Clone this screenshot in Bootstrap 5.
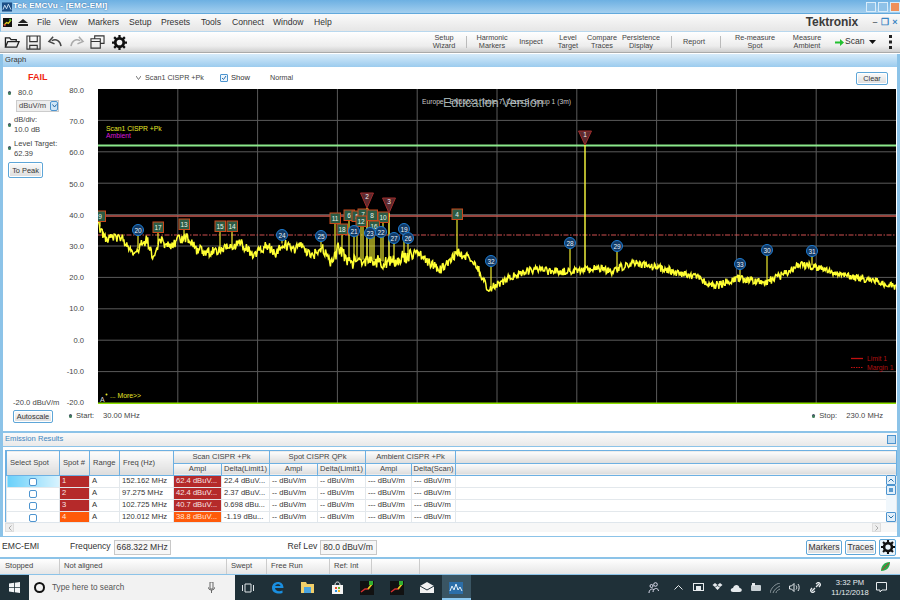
<!DOCTYPE html>
<html>

<head>
  <title>Tek EMCVu - [EMC-EMI]</title>
  <link href="https://cdn.jsdelivr.net/npm/bootstrap@5.3.2/dist/css/bootstrap.min.css" rel="stylesheet">
  <script src="https://cdn.jsdelivr.net/npm/bootstrap@5.3.2/dist/js/bootstrap.bundle.min.js"></script>
  <style>
    html, body { margin: 0; width: 900px; height: 600px; overflow: hidden; }
    body { font-family: "Liberation Sans", Arial, sans-serif; font-size: 7.6px; line-height: 1.1; color: #333; background: #fff; }
    .app-window { width: 900px; height: 600px; }

    .title-bar { height: 14px; background: linear-gradient(#6db0e2, #a3cfef); color: #fff; padding-left: 2px; font-weight: bold; font-size: 8px; letter-spacing: .2px; text-shadow: 0 0 2px #27619a; border-bottom: 1px solid #62a9dc; }
    .title-ic { margin-right: 1px; }
    .win-btn { width: 10px; height: 10px; border: 1px solid #d8ecfa; background: #8fc2e8; display: block; margin-left: 2px; }
    .win-btn-close { background: #f0905a; }

    .menu-bar { height: 18px; padding-left: 2px; background: linear-gradient(#fafafa, #e6e6e6); border-left: 1px solid #8cc3e8; border-bottom: 1px solid #b9d8ee; font-size: 8.6px; color: #333; }
    .eject-ic { margin-left: 6px; }
    .menu-items { display: grid; grid-template-columns: 22px 29px 41px 32px 40px 31px 41px 41px 30px; margin-left: 37px; left: 0; }
    .logo-text { font-weight: bold; font-size: 12px; color: #3b3b3b; margin-right: 12px; letter-spacing: -.1px; }
    .menu-ctl { width: 10px; text-align: center; color: #3a84c2; font-weight: bold; font-size: 9px; }

    .tool-bar { height: 21px; background: linear-gradient(#fff, #ededed 70%, #cfcfcf); border-bottom: 1px solid #aaa; }
    .tool-icons { display: grid; grid-template-columns: repeat(6, 21.6px); padding-left: 4px; width: 425px; }
    .tool-grid { display: grid; grid-template-columns: 38px 6px 46px 32px 42px 26px 52px 8px 38px 14px 56px 48px; align-items: center; height: 100%; font-size: 7.3px; line-height: 8.5px; color: #444; }
    .tool-grid > span { display: flex; justify-content: center; text-align: center; white-space: nowrap; }
    .tool-sep { justify-self: center; width: 1px; height: 12px; background: #bbb; }
    .scan-label { font-size: 8.6px; color: #333; margin-left: 1px; }

    .panel-outer { border-left: 3px solid #8cc3e8; border-right: 3px solid #8cc3e8; }
    .panel-title { height: 13px; background: linear-gradient(#d6ebfa, #9bcbee); padding-left: 2px; color: #333; }
    .graph-panel { height: 379px; border-bottom: 2px solid #8cc3e8; margin-top: 1px; }
    .graph-top { height: 22px; }
    .fail-label { padding-left: 25px; color: #f02510; font-weight: bold; font-size: 9px; }
    .scan-pick { width: 214px; padding-left: 133px; white-space: nowrap; color: #444; display: flex; align-items: center; gap: 4px; font-size: 7.2px; }
    .show-box { width: 8px; height: 8px; border: 1px solid #4d94cf; border-radius: 1px; margin-left: 3px; margin-right: 3px; background: #eef6fc; display: flex; }
    .mode-label { margin-left: 20px; color: #444; font-size: 7.2px; }
    .old-btn { background: linear-gradient(#fbfbfb, #dcdcdc); border: 1px solid #5ea6d8; border-radius: 2px; color: #333; font-size: 7.4px; line-height: 11px; padding: 0; box-shadow: inset 0 0 0 1px #fff; }
    .btn-clear { width: 32px; height: 13px; margin-right: 9px; }
    .btn-peak { width: 35px; height: 16px; margin-left: 5px; margin-top: 4px; flex: none; }
    .btn-auto { width: 40px; height: 13px; margin-left: 10px; }

    .graph-mid { height: 315px; }
    .side-col { width: 60px; color: #444; white-space: nowrap; }
    .side-row { display: flex; align-items: center; padding-left: 5px; gap: 3px; line-height: 10px; }
    .side-first { line-height: 8px; }
    .side-gap { margin-top: 4px; line-height: 9.500px; }
    .side-dot { width: 3px; height: 3px; background: #3f7f5a; border-radius: 50%; flex: none; box-shadow: 0 -1px 0 #446; }
    .unit-select { width: 43px; height: 12px; margin: 3px 0 3px 13px; background: #eee; border: 1px solid #ccc; padding-left: 2px; }
    .unit-arrow { width: 8px; height: 10px; background: #cfe5f6; border: 1px solid #4d94cf; border-radius: 2px; display: flex; align-items: center; justify-content: center; }
    .low-label { padding-left: 10px; margin-bottom: -3px; line-height: 8px; }
    .axis-col { width: 35px; color: #444; margin-top: -2px; margin-bottom: -3px; text-align: right; }
    .axis-col span { display: block; height: 8px; line-height: 8px; padding-right: 14px; }
    .chart-svg { display: block; width: 798px; height: 315px; background: #000; }
    .chart-svg text { font-family: "Liberation Sans", Arial, sans-serif; }

    .graph-bottom { height: 27px; padding-top: 6px; align-items: flex-start; color: #444; }
    .start-gap { margin-left: 16px; }
    .stop-gap { margin-right: 14px; }
    .start-stop { display: flex; align-items: center; height: 13px; }
    .lbl-start { width: 27px; }
    .lbl-stop { width: 27px; }

    .emis-panel { height: 103px; }
    .emis-title { height: 14px; background: linear-gradient(#fafafa, #e9e9e9); color: #3d86c0; padding-left: 2px; border-bottom: 1px solid #8cc3e8; }
    .corner-tag { width: 9px; height: 9px; background: #bfdcf2; border: 1px solid #4d94cf; margin-right: 1px; }
    .grid-wrap { height: 72px; margin: 3px 0 0 2px; overflow: hidden; position: relative; border-left: 1px solid #6db0e2; }
    .spots-table { table-layout: fixed; width: 891px; border-collapse: collapse; margin: 0; font-size: 7.6px; color: #333; }
    .spots-table th { font-weight: normal; background: linear-gradient(#fdfdfd, #dcdcdc); border: 1px solid #6db0e2; height: 12.500px; padding: 0 1px; text-align: center; white-space: nowrap; overflow: hidden; color: #444; }
    .spots-table th.head-left { text-align: left; padding-left: 3px; }
    .spots-table td { height: 12px; padding: 0 2px; border: 1px solid #e3e8ec; white-space: nowrap; overflow: hidden; }
    .cell-hot { background: #b52a2a; color: #f8e6e6; }
    .cell-warn { background: #ff5a0a; color: #ffe6d8; }
    .row-picked { background: linear-gradient(90deg, #69d0fa, #d8f3fe); }
    .spot-check { display: block; width: 8px; height: 8px; margin: 0 auto; border: 1px solid #4d94cf; border-radius: 2px; background: #fff; }
    .v-scroll { position: absolute; right: 1px; top: 25px; width: 10px; height: 47px; background: #f0f7fc; }
    .v-scroll i { display: flex; align-items: center; justify-content: center; height: 10px; flex: none; background: #e3f0fa; border: 1px solid #4d94cf; border-radius: 1px; }
    .h-scroll { height: 10px; margin: 0 0 0 2px; background: #f7f7f7; border-top: 1px solid #dfe6ec; }
    .h-scroll i { display: flex; align-items: center; justify-content: center; width: 9px; height: 9px; background: #eee; border: 1px solid #ddd; }

    .freq-bar { height: 21px; background: #fff; font-size: 8.6px; color: #333; border-top: 1px solid #8cc3e8; }
    .freq-name { width: 70px; padding-left: 2px; }
    .freq-input { border: 1px solid #c8c8c8; background: #f7f7f7; height: 15px; line-height: 13px; padding: 0 2px; width: 57px; margin-left: 3px; white-space: nowrap; }
    .ref-label { margin-left: 117px; }
    .btn-mark { font-size: 8.6px; height: 15px; margin-right: 3px; }
    .mark-w { width: 36px; }
    .trace-w { width: 31px; }
    .gear-btn { width: 17px; height: 17px; margin-right: 4px; border: 1px solid #5ea6d8; border-radius: 2px; background: #eaf4fb; display: flex; align-items: center; justify-content: center; }

    .status-bar { height: 18px; background: linear-gradient(#fff, #e6e6e6); border-top: 2px solid #8cc3e8; border-bottom: 1px solid #8cc3e8; color: #444; display: grid; grid-template-columns: 59px 167px 40px 63px 42px 48px 1fr; padding-left: 1px; }
    .status-bar span { display: flex; align-items: center; padding-left: 4px; border-right: 1px solid #ccc; }
    .status-bar span:last-child { border-right: 0; justify-content: flex-end; padding-right: 10px; }

    .task-bar { height: 25px; background: #1f3038; color: #e8edf0; flex: none; }
    .start-slot { width: 29px; }
    .search-box { width: 206px; height: 100%; background: #f2f2f2; color: #555; font-size: 8.2px; padding: 0 20px 0 5px; gap: 7px; }
    .search-ring { width: 11px; height: 11px; border: 2px solid #111; border-radius: 50%; }
    .task-apps { display: grid; grid-template-columns: repeat(8, 29.8px); margin-left: -2px; height: 100%; }
    .task-apps > span { display: flex; align-items: center; justify-content: center; }
    .task-on { background: #3a5563; box-shadow: inset 0 -2px 0 #8cc8f0; }
    .tray { display: grid; grid-template-columns: 26px 24px 16px 22px 16px 24px 14px 24px 18px; align-items: center; justify-items: center; }
    .clock-text { text-align: center; font-size: 7.6px; line-height: 10px; width: 52px; }
    .note-ic { margin-right: 13px; }
  </style>
</head>

<body>
  <div class="app-window d-flex flex-column">

    <div class="title-bar d-flex align-items-center">
      <svg width="10" height="10" viewBox="0 0 11 10" class="title-ic"><rect width="11" height="10" fill="#1d4f86"/><path d="M1 8 3 3 5 7 7 2 10 8" fill="none" stroke="#cfe6f8"/></svg>
      <span>Tek EMCVu - [EMC-EMI]</span>
      <span class="ms-auto d-flex">
        <span class="win-btn"></span><span class="win-btn"></span><span class="win-btn win-btn-close"></span>
      </span>
    </div>

    <div class="menu-bar d-flex align-items-center">
      <svg width="9" height="9" viewBox="0 0 10 10"><rect width="10" height="10" fill="#111"/><path d="M1 8 4 5 6 6 9 2" fill="none" stroke="#e0d020" stroke-width="1.4"/><rect x="7" y="1" width="2" height="2" fill="#3c3"/><rect x="1" y="7" width="2" height="2" fill="#c33"/></svg>
      <svg width="10" height="7" viewBox="0 0 10 7" class="eject-ic"><path d="M5 0 10 4H0ZM0 5H10V7H0Z" fill="#222"/></svg>
      <div class="menu-items position-absolute">
        <span>File</span><span>View</span><span>Markers</span><span>Setup</span><span>Presets</span><span>Tools</span><span>Connect</span><span>Window</span><span>Help</span>
      </div>
      <span class="ms-auto logo-text">Tektronix</span>
      <span class="menu-ctl text-secondary">–</span><span class="menu-ctl">❐</span><span class="menu-ctl">×</span>
    </div>

    <div class="tool-bar d-flex align-items-center">
      <div class="tool-icons">
        <svg width="16" height="15" viewBox="0 0 17 16" fill="none" stroke="#222" stroke-width="1.4"><path d="M1.5 13V3H6L7.500 5H13V7M1.500 13 4 7H16L13.500 13Z"/></svg>
        <svg width="15" height="15" viewBox="0 0 16 16" fill="none" stroke="#333" stroke-width="1.2"><path d="M1 1H15V15H1Z M4 1V7H12V1 M4 15V11H12V15"/></svg>
        <svg width="16" height="13" viewBox="0 0 17 14" fill="none" stroke="#444" stroke-width="1.6"><path d="M15 12C14 6 10 4 5 6M6.500 2 2 7 8 9.500"/></svg>
        <svg width="16" height="13" viewBox="0 0 17 14" fill="none" stroke="#aaa" stroke-width="1.6"><path d="M2 12C3 6 7 4 12 6M10.500 2 15 7 9 9.500"/></svg>
        <svg width="15" height="14" viewBox="0 0 16 15" fill="none" stroke="#333" stroke-width="1.2"><path d="M5 4V1H15V9H11M1 4H11V14H1ZM1 7H11"/></svg>
        <svg width="15" height="15" viewBox="0 0 16 16"><circle cx="8" cy="8" r="4.500" fill="none" stroke="#111" stroke-width="3"/><path d="M8 0V16M0 8H16M2.300 2.300 13.700 13.700M13.700 2.300 2.300 13.700" stroke="#111" stroke-width="2.400"/><circle cx="8" cy="8" r="3" fill="#f4f4f4"/></svg>
      </div>
      <div class="tool-grid">
        <span>Setup<br>Wizard</span>
        <i class="tool-sep"></i>
        <span>Harmonic<br>Markers</span>
        <span>Inspect</span>
        <span>Level<br>Target</span>
        <span>Compare<br>Traces</span>
        <span>Persistence<br>Display</span>
        <i class="tool-sep"></i>
        <span>Report</span>
        <i class="tool-sep"></i>
        <span>Re-measure<br>Spot</span>
        <span>Measure<br>Ambient</span>
      </div>
      <div class="d-flex align-items-center flex-grow-1">
        <svg width="9" height="7" viewBox="0 0 9 7" class="ms-1"><path d="M0 2.500H5V0L9 3.500 5 7V4.500H0Z" fill="#22c030"/></svg>
        <span class="scan-label">Scan</span>
        <svg width="7" height="4" viewBox="0 0 7 4" class="ms-1"><path d="M0 0H7L3.500 4Z" fill="#111"/></svg>
        <svg width="3" height="14" viewBox="0 0 3 14" class="ms-auto me-2"><path d="M0 0H3V3H0ZM0 5.500H3V8.500H0ZM0 11H3V14H0Z" fill="#222"/></svg>
      </div>
    </div>

    <div class="panel-outer graph-panel">
      <div class="panel-title d-flex align-items-center">Graph</div>
      <div class="graph-top d-flex align-items-center">
        <span class="fail-label position-absolute">FAIL</span>
        <span class="scan-pick">
          <svg width="5" height="4" viewBox="0 0 5 4"><path d="M0 0 2.500 3.500 5 0" fill="none" stroke="#777"/></svg>
          <span>Scan1 CISPR +Pk</span>
        </span>
        <span class="show-box"><svg width="6" height="6" viewBox="0 0 6 6"><path d="M1 3 2.500 4.500 5 1" fill="none" stroke="#2a70b0"/></svg></span><span>Show</span>
        <span class="mode-label">Normal</span>
        <button type="button" class="old-btn btn-clear ms-auto">Clear</button>
      </div>
      <div class="graph-mid d-flex">
        <div class="side-col d-flex flex-column">
          <div class="side-row side-first"><i class="side-dot"></i><span class="ms-1">80.0</span></div>
          <div class="unit-select d-flex align-items-center justify-content-between"><span>dBuV/m</span><i class="unit-arrow"><svg width="5" height="4" viewBox="0 0 5 4"><path d="M.5 .5 2.500 3 4.500 .5" fill="none" stroke="#26679f"/></svg></i></div>
          <div class="side-row"><i class="side-dot"></i><span>dB/div:<br>10.0 dB</span></div>
          <div class="side-row side-gap"><i class="side-dot"></i><span>Level Target:<br>62.39</span></div>
          <button type="button" class="old-btn btn-peak">To Peak</button>
          <div class="low-label mt-auto">-20.0 dBuV/m</div>
        </div>
        <div class="axis-col d-flex flex-column justify-content-between">
          <span>80.0</span><span>70.0</span><span>60.0</span><span>50.0</span><span>40.0</span><span>30.0</span><span>20.0</span><span>10.0</span><span>0.0</span><span>-10.0</span><span>-20.0</span>
        </div>
        <svg id="chart" class="chart-svg" viewBox="98 89 798 315"></svg>
      </div>
      <div class="graph-bottom d-flex">
        <button type="button" class="old-btn btn-auto">Autoscale</button>
        <div class="start-stop start-gap"><i class="side-dot me-1"></i><span class="lbl-start">Start:</span><span>30.00 MHz</span></div>
        <div class="start-stop ms-auto stop-gap"><i class="side-dot me-1"></i><span class="lbl-stop">Stop:</span><span>230.0 MHz</span></div>
      </div>
    </div>

    <div class="panel-outer emis-panel">
      <div class="emis-title d-flex align-items-center">Emission Results<span class="corner-tag ms-auto"></span></div>
      <div class="grid-wrap">
        <table class="spots-table">
          <colgroup>
            <col width="53"><col width="30"><col width="30"><col width="54">
            <col width="48"><col width="48"><col width="48"><col width="48"><col width="46"><col width="44"><col>
          </colgroup>
          <thead>
            <tr>
              <th rowspan="2" class="head-left">Select Spot</th><th rowspan="2" class="head-left">Spot #</th><th rowspan="2" class="head-left">Range</th><th rowspan="2" class="head-left">Freq (Hz)</th>
              <th colspan="2">Scan CISPR +Pk</th><th colspan="2">Spot CISPR QPk</th><th colspan="2">Ambient CISPR +Pk</th><th></th>
            </tr>
            <tr>
              <th>Ampl</th><th>Delta(Limit1)</th><th>Ampl</th><th>Delta(Limit1)</th><th>Ampl</th><th>Delta(Scan)</th><th></th>
            </tr>
          </thead>
          <tbody id="spotRows"></tbody>
        </table>
        <div class="v-scroll d-flex flex-column">
          <i><svg width="6" height="4" viewBox="0 0 6 4"><path d="M.5 3.500 3 1 5.500 3.500" fill="none" stroke="#2a6fa8"/></svg></i>
          <i><svg width="4" height="4" viewBox="0 0 4 4"><rect width="4" height="4" fill="#5b9bcf"/></svg></i>
          <span class="flex-grow-1"></span>
          <i><svg width="6" height="4" viewBox="0 0 6 4"><path d="M.5 .5 3 3 5.500 .5" fill="none" stroke="#2a6fa8"/></svg></i>
        </div>
      </div>
      <div class="h-scroll d-flex justify-content-between">
        <i><svg width="4" height="6" viewBox="0 0 4 6"><path d="M3.500 .5 1 3 3.500 5.500" fill="none" stroke="#aaa"/></svg></i>
        <i class="me-3"><svg width="4" height="6" viewBox="0 0 4 6"><path d="M.5 .5 3 3 .5 5.500" fill="none" stroke="#aaa"/></svg></i>
      </div>
    </div>

    <div class="freq-bar d-flex align-items-center">
      <span class="freq-name">EMC-EMI</span>
      <span>Frequency</span><span class="freq-input">668.322 MHz</span>
      <span class="ref-label">Ref Lev</span><span class="freq-input">80.0 dBuV/m</span>
      <button type="button" class="old-btn btn-mark mark-w ms-auto">Markers</button>
      <button type="button" class="old-btn btn-mark trace-w">Traces</button>
      <span class="gear-btn"><svg width="14" height="14" viewBox="0 0 16 16"><circle cx="8" cy="8" r="4.500" fill="none" stroke="#111" stroke-width="3"/><path d="M8 0V16M0 8H16M2.300 2.300 13.700 13.700M13.700 2.300 2.300 13.700" stroke="#111" stroke-width="2.400"/><circle cx="8" cy="8" r="3" fill="#eaf4fb"/></svg></span>
    </div>

    <div class="status-bar">
      <span>Stopped</span><span>Not aligned</span><span>Swept</span><span>Free Run</span><span>Ref: Int</span><span></span>
      <span><svg width="9" height="9" viewBox="0 0 9 9"><path d="M0 9C0 4 3 0 9 0 9 5 6 9 0 9Z" fill="#2aa84a"/><path d="M1 8 8 1" stroke="#c03030"/></svg></span>
    </div>

    <div class="task-bar d-flex align-items-center">
      <div class="start-slot d-flex justify-content-center">
        <svg width="11" height="11" viewBox="0 0 11 11"><path d="M0 1.500 5 .8V5H0ZM5.800.7 11 0V5H5.800ZM0 5.800H5V10.200L0 9.500ZM5.800 5.800H11V11L5.800 10.300Z" fill="#f2f5f7"/></svg>
      </div>
      <div class="search-box d-flex align-items-center">
        <i class="search-ring"></i><span>Type here to search</span>
        <svg width="7" height="11" viewBox="0 0 7 11" class="ms-auto"><path d="M2 0H5V7H2ZM0 5C0 9 7 9 7 5M3.500 8V11" fill="none" stroke="#666"/></svg>
      </div>
      <div class="task-apps">
        <span><svg width="12" height="12" viewBox="0 0 12 12" fill="none" stroke="#e0e5e8"><path d="M3 2H9V10H3ZM.5 3V9M11.500 3V9"/></svg></span>
        <span><svg width="13" height="13" viewBox="0 0 13 13"><path d="M1 7C1 3 4 1 7 1 10 1 12.500 3 12.500 7H4C4 10 8 11 11.500 9.500V12C7 13.500 1 12 1 7ZM4.200 5H9.500C9.300 2.700 4.800 2.700 4.200 5Z" fill="#1a8fe0"/></svg></span>
        <span><svg width="13" height="11" viewBox="0 0 13 11"><path d="M0 0H5L6 2H13V11H0Z" fill="#f0cf6a"/><path d="M3 5H10V11H3Z" fill="#4aa4e0"/></svg></span>
        <span><svg width="13" height="13" viewBox="0 0 13 13"><path d="M1 4H12V13H1Z" fill="#f4f4f4"/><path d="M4 4C4 0 9 0 9 4" fill="none" stroke="#f4f4f4"/><path d="M4 6H6V8H4Z" fill="#e74c2b"/><path d="M7 6H9V8H7Z" fill="#6ab82e"/><path d="M4 9H6V11H4Z" fill="#2a94e0"/><path d="M7 9H9V11H7Z" fill="#f0b820"/></svg></span>
        <span><svg width="14" height="14" viewBox="0 0 14 14"><rect width="14" height="14" fill="#111"/><path d="M1 11 5 8 8 8 12 3" fill="none" stroke="#d83030" stroke-width="1.500"/><path d="M8 8 12 3" stroke="#e0d020" stroke-width="1.500"/><path d="M9 0H13V4H9Z" fill="#32b032"/></svg></span>
        <span><svg width="14" height="14" viewBox="0 0 14 14"><rect width="14" height="14" fill="#111"/><path d="M1 11 5 8 8 8 12 3" fill="none" stroke="#d83030" stroke-width="1.500"/><path d="M8 8 12 3" stroke="#e0d020" stroke-width="1.500"/><path d="M9 0H13V4H9Z" fill="#32b032"/></svg></span>
        <span><svg width="14" height="11" viewBox="0 0 14 11"><path d="M0 4 7 0 14 4V11H0Z" fill="#f2f2f2"/><path d="M0 4 7 8 14 4" fill="none" stroke="#1f3038"/></svg></span>
        <span class="task-on"><svg width="14" height="12" viewBox="0 0 14 12"><rect width="14" height="12" fill="#2c6ea8"/><path d="M1 9 3 4 5 8 7 2 9 8 11 5 13 9" fill="none" stroke="#e6f2fb"/></svg></span>
      </div>
      <div class="ms-auto d-flex align-items-center">
        <div class="tray">
          <svg width="11" height="11" viewBox="0 0 11 11" fill="none" stroke="#dde"><circle cx="7.500" cy="2.500" r="1.800"/><circle cx="3.500" cy="4" r="1.500"/><path d="M1 11C1 7 5 6 6 8M5 10C5 6 10 5 10.500 9"/></svg>
          <svg width="9" height="5" viewBox="0 0 9 5" fill="none" stroke="#e6eaed"><path d="M.5 4.500 4.500.5 8.500 4.500"/></svg>
          <svg width="11" height="9" viewBox="0 0 11 9"><rect x=".5" y=".5" width="10" height="7" fill="none" stroke="#e6eaed"/><rect x="3" y="3" width="5" height="4" fill="#e6eaed"/></svg>
          <svg width="11" height="9" viewBox="0 0 11 9"><path d="M3 0 5.500 2 3 4 .5 2ZM8 0 10.500 2 8 4 5.500 2ZM3 4.500 5.500 3 8 4.500 5.500 7Z" fill="#e6eaed"/></svg>
          <svg width="12" height="8" viewBox="0 0 12 8"><path d="M3 8C0 8 0 4 3 4 4 0 9 0 9.500 4 12.500 4 12.500 8 9.500 8Z" fill="#e6eaed"/></svg>
          <svg width="11" height="9" viewBox="0 0 11 9"><rect y="2" width="10" height="6" rx="1" fill="#c8d0d4"/><rect x="1" width="3" height="3" fill="#e6eaed"/></svg>
          <svg width="10" height="10" viewBox="0 0 10 10" fill="none" stroke="#8b979c"><path d="M0 10C1 5 5 1 10 0M3 10C4 7 6 5 10 3M6 10C6 8 8 7 10 6"/></svg>
          <svg width="11" height="9" viewBox="0 0 11 9" fill="none" stroke="#e6eaed"><path d="M.5 3H2.500L5 .5V8.500L2.500 6H.5ZM7 2.500C8 3.500 8 5.500 7 6.500M9 1C10.500 3 10.500 6 9 8"/></svg>
          <svg width="11" height="11" viewBox="0 0 11 11" fill="none" stroke="#e6eaed" stroke-width="1.300"><path d="M5 6 2 9M2 6 .8 7.500C0 9 2 11 3.500 10.200L5 9M6 5 9 2M6 2 7.500.8C9 0 11 2 10.200 3.500L9 5"/></svg>
        </div>
        <div class="clock-text">3:32 PM<br>11/12/2018</div>
        <svg width="11" height="11" viewBox="0 0 11 11" class="note-ic" fill="none" stroke="#e6eaed"><path d="M.5.5H10.500V8H6L4 10V8H.5Z"/></svg>
      </div>
    </div>
  </div>

  <script>
    // spot table rows
    const spotRows = [
      { num: 1, freq: "152.162 MHz", ampl: "62.4 dBuV...", delta: "22.4 dBuV...", cls: "cell-hot", picked: true },
      { num: 2, freq: "97.275 MHz", ampl: "42.4 dBuV...", delta: "2.37 dBuV...", cls: "cell-hot" },
      { num: 3, freq: "102.725 MHz", ampl: "40.7 dBuV...", delta: "0.698 dBu...", cls: "cell-hot" },
      { num: 4, freq: "120.012 MHz", ampl: "38.8 dBuV...", delta: "-1.19 dBu...", cls: "cell-warn" }
    ];

    document.querySelector("#spotRows").innerHTML = spotRows.map(r => `
      <tr>
        <td class="${r.picked ? 'row-picked' : ''}"><i class="spot-check"></i></td>
        <td class="${r.cls}">${r.num}</td>
        <td>A</td>
        <td>${r.freq}</td>
        <td class="${r.cls}">${r.ampl}</td>
        <td>${r.delta}</td>
        <td>-- dBuV/m</td><td>-- dBuV/m</td><td>--- dBuV/m</td><td>--- dBuV/m</td><td></td>
      </tr>`).join("");

    // chart, drawn in page coordinates through the viewBox
    const tracePoints = [
      [98,222],[103,236],[107,238],[120,237],[127,243],[135,255],[140,245],[147,240],[153,258],[160,240],
      [170,248],[180,238],[187,238],[197,250],[213,252],[240,243],[253,255],[267,245],[275,255],[283,243],
      [293,250],[300,245],[312,257],[322,247],[332,262],[338,248],[350,263],[367,260],[387,263],[400,258],
      [417,253],[440,270],[458,252],[475,262],[488,290],[510,277],[533,270],[567,272],[600,268],[610,272],
      [633,262],[660,268],[697,277],[707,285],[720,285],[737,278],[763,283],[783,275],[800,265],[817,267],
      [840,275],[873,280],[896,286]
    ];

    function baseY(x) {
      for (let i = 1; i < tracePoints.length; i++) {
        const [x1, y1] = tracePoints[i];
        const [x0, y0] = tracePoints[i - 1];
        if (x <= x1) return y0 + (y1 - y0) * (x - x0) / (x1 - x0);
      }
      return 286;
    }

    let seed = 1234;
    function rnd() {
      seed = (seed * 16807) % 2147483647;
      return seed / 2147483647;
    }

    const tracePath = [];
    for (let x = 98; x <= 896; x += 0.7) {
      const amp = x > 330 && x < 415 ? 14 : x > 480 ? 8 : 10;
      tracePath.push(`${x.toFixed(1)},${(baseY(x) + (rnd() - 0.5) * amp).toFixed(1)}`);
    }

    const squares = [
      ["9",100,216],["17",158,227],["13",184,224],["15",220,226],["14",232,226],["11",335,218],["18",342,229],
      ["6",349,215],["5",357,216],["7",363,214],["12",361,221],["8",372,215],["10",383,217],["16",374,226],["4",457,214]
    ];
    const circles = [
      ["20",138,230],["24",282,235],["25",321,236],["21",354,231],["23",370,233],["22",381,232],["27",394,238],
      ["19",404,229],["26",408,238],["28",570,243],["29",617,246],["32",491,261],["33",740,264],["30",767,250],["31",812,251]
    ];
    const triangles = [["1",585,138,145],["2",367,200,208],["3",389,205,213]];

    let svg = "";
    // grid
    for (let i = 1; i < 10; i++) svg += `<path d="M${98 + 79.8 * i} 89V404" stroke="#5a5a5a"/>`;
    for (let i = 1; i < 10; i++) svg += `<path d="M98 ${89 + 31.4 * i}H896" stroke="#5a5a5a"/>`;
    // limit lines
    svg += `<path d="M98 145.500H896" stroke="#8be88b" stroke-width="1.800"/>`;
    svg += `<path d="M98 216H896" stroke="#c85a50" stroke-width="1.300"/>`;
    svg += `<path d="M98 235H896" stroke="#d05050" stroke-width="1" stroke-dasharray="5 1.500 1.500 1.500"/>`;
    svg += `<path d="M98 403.500H896" stroke="#8ee000" stroke-width="2"/>`;
    // stems
    triangles.forEach(m => { svg += `<path d="M${m[1]} ${m[3]}V${baseY(m[1])}" stroke="#ffff40" stroke-width="1.400"/>`; });
    squares.concat(circles).forEach(m => { svg += `<path d="M${m[1]} ${m[2]}V${baseY(m[1]) - 1}" stroke="#f0ec30" stroke-width="1.200"/>`; });
    // trace
    svg += `<polyline points="${tracePath.join(" ")}" fill="none" stroke="#ffff33" stroke-width="1.500"/>`;
    // markers
    squares.forEach(m => {
      svg += `<rect x="${m[1] - 5}" y="${m[2] - 5}" width="10.500" height="10.500" fill="#2c5b44" stroke="#c84a1c"/>
        <text x="${m[1]}" y="${m[2] + 2.500}" fill="#e8f2ea" font-size="6.500" text-anchor="middle">${m[0]}</text>`;
    });
    circles.forEach(m => {
      svg += `<circle cx="${m[1]}" cy="${m[2]}" r="5.500" fill="#123a66" stroke="#1f7ed4"/>
        <text x="${m[1]}" y="${m[2] + 2.500}" fill="#e8f0f8" font-size="6.500" text-anchor="middle">${m[0]}</text>`;
    });
    triangles.forEach(m => {
      svg += `<path d="M${m[1] - 6.500} ${m[2] - 7}H${m[1] + 6.500}L${m[1]} ${m[3]}Z" fill="#5c2a2e" stroke="#a02c2c"/>
        <text x="${m[1]}" y="${m[2] - 1}" fill="#eee" font-size="6.500" text-anchor="middle">${m[0]}</text>`;
    });
    // chart captions
    svg += `<text x="422" y="103.500" fill="#ccc" font-size="6.700">Europe - EN55022, Table 7, Class B Group 1 (3m)</text>`;
    svg += `<text x="443" y="107" fill="#bcc" fill-opacity=".85" font-size="12.500">Education Version</text>`;
    svg += `<text x="106" y="131" fill="#e8e828" font-size="6.800">Scan1 CISPR +Pk</text>`;
    svg += `<text x="106" y="138" fill="#d818d8" font-size="6.800">Ambient</text>`;
    svg += `<text x="100" y="402" fill="#ddd" font-size="7">A</text>`;
    svg += `<circle cx="106.500" cy="394.500" r="1" fill="#e8e828"/><text x="110" y="398" fill="#e8e828" font-size="6.800">... More&gt;&gt;</text>`;
    svg += `<path d="M851 358.500H863" stroke="#c01010" stroke-width="1.300"/><text x="867" y="361" fill="#b01010" font-size="6.800">Limit 1</text>`;
    svg += `<path d="M851 367.500H863" stroke="#c01010" stroke-dasharray="1.500 1"/><text x="867" y="370" fill="#b01010" font-size="6.800">Margin 1</text>`;

    document.querySelector("#chart").innerHTML = svg;
  </script>
</body>

</html>
